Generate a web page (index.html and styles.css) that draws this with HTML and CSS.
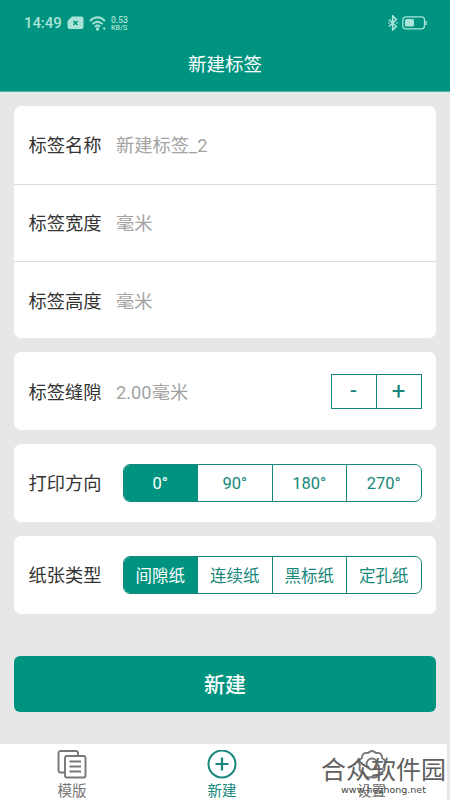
FILE: index.html
```html
<!DOCTYPE html>
<html lang="zh-CN">
<head>
<meta charset="utf-8">
<title>新建标签</title>
<link rel="stylesheet" href="styles.css">
</head>
<body>
<div class="app">
  <header class="header">
    <div class="status">
      <span class="time">14:49</span>
      <svg class="sim" width="17" height="14" viewBox="0 0 17 14"><path fill="currentColor" d="M5 .5h9.500a2 2 0 0 1 2 2v8.500a2 2 0 0 1-2 2h-12a2 2 0 0 1-2-2V5z"/><path d="m6.500 5 4 4m0-4-4 4" stroke="#009480" stroke-width="1.700"/></svg>
      <svg class="wifi" width="18" height="15" viewBox="0 0 18 15" fill="none" stroke="currentColor" stroke-width="1.900"><path d="M1 5Q8.500-2.300 16 5M3.500 8q5-4.700 10 0M6 10.700q2.500-2.200 5 0"/><circle cx="8.500" cy="13" r=".7" fill="currentColor"/><circle cx="15.300" cy="12.500" r=".8" fill="currentColor" stroke-width="1"/></svg>
      <span class="speed"><span>0.53</span><span class="unit">KB/S</span></span>
      <svg class="bluetooth" width="10" height="16" viewBox="0 0 10 16" fill="none" stroke="currentColor" stroke-width="1.600"><path d="m1 4.500 7.300 7L4.700 15V1l3.600 3.500-7.300 7M.3 8h1.400m6.600 0h1.400"/></svg>
      <svg class="battery" width="25" height="14" viewBox="0 0 25 14"><rect x=".8" y=".8" width="21.700" height="12" rx="3" fill="none" stroke="currentColor" stroke-width="1.300"/><rect x="3" y="3" width="9" height="7.600" rx="1.500" fill="currentColor"/><path d="M24 5v4" stroke="currentColor" stroke-width="1.500"/></svg>
    </div>
    <h1 class="title">新建标签</h1>
  </header>
  <main class="content">
    <section class="card fields">
      <div class="row"><span class="label">标签名称</span><span class="value">新建标签_2</span></div>
      <div class="row"><span class="label">标签宽度</span><span class="value">毫米</span></div>
      <div class="row"><span class="label">标签高度</span><span class="value">毫米</span></div>
    </section>
    <section class="card row">
      <span class="label">标签缝隙</span><span class="value">2.00毫米</span>
      <div class="stepper"><button class="step">-</button><button class="step plus">+</button></div>
    </section>
    <section class="card row">
      <span class="label">打印方向</span>
      <div class="segments"><button class="segment active">0°</button><button class="segment">90°</button><button class="segment">180°</button><button class="segment">270°</button></div>
    </section>
    <section class="card row">
      <span class="label">纸张类型</span>
      <div class="segments paper"><button class="segment active">间隙纸</button><button class="segment">连续纸</button><button class="segment">黑标纸</button><button class="segment">定孔纸</button></div>
    </section>
    <button class="create">新建</button>
  </main>
  <nav class="tabs">
    <div class="tab">
      <svg width="30" height="30" viewBox="0 0 30 30" fill="none" stroke="currentColor" stroke-width="1.900"><path d="M7 22.500H3.500A2 2 0 0 1 1.500 20.500V3a2 2 0 0 1 2-2H19a2 2 0 0 1 2 2v3"/><rect x="8" y="6" width="20.500" height="21.500" rx="2"/><path d="M12.500 11.500h11.500m-11.500 5h11.500m-11.500 5h11.500"/></svg>
      <span>模版</span>
    </div>
    <div class="tab current">
      <svg width="30" height="30" viewBox="0 0 30 30" fill="none" stroke="currentColor"><circle cx="15" cy="14" r="13.500" stroke-width="2"/><path d="M8.500 14h13M15 7.500v13" stroke-width="2.200"/></svg>
      <span>新建</span>
    </div>
    <div class="tab">
      <svg width="30" height="30" viewBox="0 0 30 30" fill="none" stroke="currentColor" stroke-width="1.900"><path d="M11 3q4-4 8 0 6-1 6 5 5 3 2 7 2 7-4 8-2 6-8 4-6 2-8-4-6-1-4-8-3-4 2-7 0-6 6-5Z"/><circle cx="15" cy="14" r="5.500"/></svg>
      <span>设置</span>
    </div>
    <div class="watermark"><span class="site-name">合众软件园</span><span class="site-url">www.hezhong.net</span></div>
  </nav>
</div>
</body>
</html>
```

FILE: styles.css
```css
* { box-sizing: border-box; }
body {
  margin: 0;
  background: #e7e7e7;
  font-family: Roboto, "Noto Sans CJK SC", sans-serif;
}
button {
  margin: 0;
  padding: 0;
  border: 0;
  background: none;
  color: inherit;
  font: inherit;
}
svg { display: block; flex: none; }
.app {
  width: 450px;
  height: 800px;
  display: flex;
  flex-direction: column;
  overflow: hidden;
}
.header {
  height: 92px;
  flex: none;
  background: #009480;
  color: #fff;
  border-bottom: 1px solid #4fb3a5;
}
.status {
  height: 46px;
  padding: 0 23px 0 24px;
  display: flex;
  align-items: center;
  color: #a9e4d8;
}
.time { width: 43px; font-size: 15px; font-weight: 500; letter-spacing: -.1px; }
.wifi { margin-left: 5px; }
.speed {
  margin-left: 4px;
  display: flex;
  flex-direction: column;
  font-size: 8.5px;
  line-height: 8px;
  font-weight: 500;
}
.unit { font-size: 7.300px; line-height: 7px; }
.bluetooth { margin-left: auto; }
.battery { margin-left: 4px; }
.title {
  margin: 6px 0 0;
  text-align: center;
  font-size: 18.5px;
  line-height: 27px;
  font-weight: 400;
}
.content {
  flex: 1;
  padding: 14px 14px 0;
  display: flex;
  flex-direction: column;
  gap: 14px;
}
.card {
  flex: none;
  background: #fff;
  border-radius: 7px;
}
.row {
  height: 77.800px;
  padding: 0 14.500px;
  display: flex;
  align-items: center;
  line-height: 28px;
  font-size: 18.300px;
}
.fields { height: 232.300px; }
.fields .row { height: 77.500px; }
.fields .row + .row { border-top: 1px solid #dcdcdc; }
.label { width: 87.500px; padding-top: 3px; color: #333; }
.value { padding-top: 3px; color: #a3a3a3; }
.stepper {
  width: 91px;
  height: 35px;
  margin-left: auto;
  display: flex;
  border: 1px solid #16877a;
  color: #16877a;
}
.step { flex: 1; font-size: 23px; line-height: 32px; }
.step + .step { border-left: 1px solid #16877a; }
.step.plus { font-size: 24px; }
.segments {
  width: 299px;
  height: 38px;
  margin-left: auto;
  display: flex;
  border: 1px solid #16877a;
  border-radius: 7px;
  overflow: hidden;
  color: #16877a;
}
.segment { flex: 1; padding-top: 2px; font-size: 16.500px; line-height: 34px; }
.paper .segment { padding-top: 3px; line-height: 33px; }
.segment + .segment { border-left: 1px solid #16877a; }
.segment.active { background: #009480; color: #fff; }
.create {
  height: 56px;
  flex: none;
  margin-top: 28px;
  padding-bottom: 2px;
  border-radius: 6px;
  background: #009480;
  color: #fff;
  font-size: 21px;
  font-weight: 500;
}
.tabs {
  position: relative;
  width: 447px;
  height: 56.500px;
  flex: none;
  display: flex;
  background: #fff;
}
.tab {
  width: 150px;
  flex: none;
  padding: 6px 6px 0 0;
  display: flex;
  flex-direction: column;
  align-items: center;
  color: #777;
  font-size: 14.500px;
  line-height: 24px;
}
.tab.current { color: #16877a; }
.tab:nth-child(3) { padding-right: 7px; }
.watermark {
  position: absolute;
  top: 14px;
  right: 1px;
  width: 125px;
  display: flex;
  flex-direction: column;
  align-items: center;
  color: #606060;
  white-space: nowrap;
}
.site-name { font-size: 25px; line-height: 26px; font-weight: 400; }
.site-url { font: 9.500px/12px "DejaVu Sans", sans-serif; color: #444; }
```
